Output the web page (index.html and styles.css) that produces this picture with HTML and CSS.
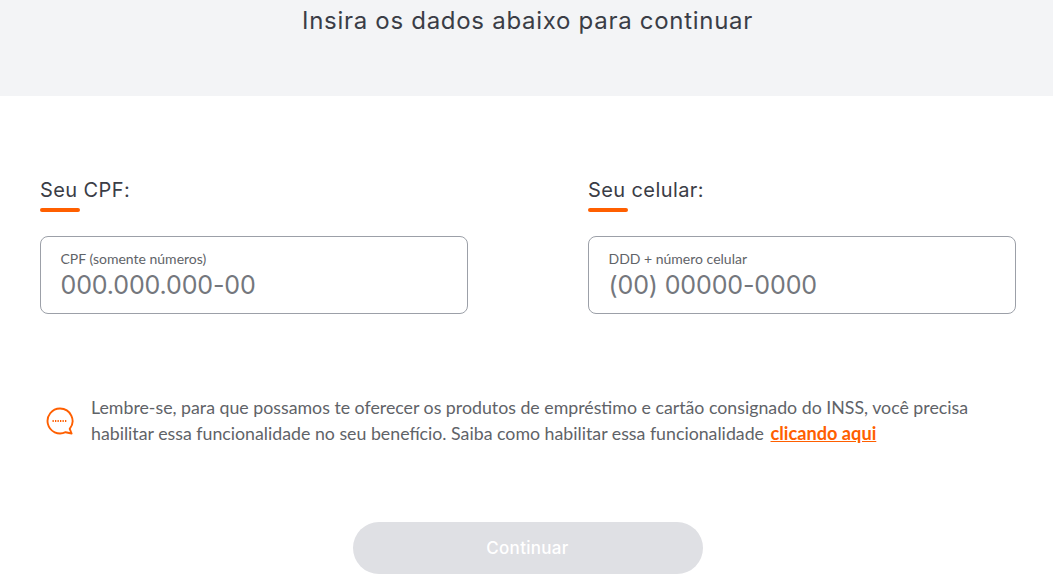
FILE: index.html
```html
<!DOCTYPE html>
<html lang="pt-BR">
<head>
  <meta charset="UTF-8">
  <title>Insira os dados</title>
  <link rel="stylesheet" href="styles.css">
</head>
<body>
  <div class="top-band">
    <h1>Insira os dados abaixo para continuar</h1>
  </div>

  <div class="form-row">
    <div class="field-col">
      <h2>Seu CPF:</h2>
      <div class="dash"></div>
      <label class="field-box">
        <span class="field-label">CPF (somente números)</span>
        <input class="field-input" type="text" placeholder="000.000.000-00">
      </label>
    </div>
    <div class="field-col">
      <h2>Seu celular:</h2>
      <div class="dash"></div>
      <label class="field-box">
        <span class="field-label">DDD + número celular</span>
        <input class="field-input" type="text" placeholder="(00) 00000-0000">
      </label>
    </div>
  </div>

  <div class="notice">
    <svg class="notice-icon" width="30" height="30" viewBox="0 0 30 30" fill="none">
      <path d="M15 2.5a12.5 12.5 0 1 0 5.6 23.7l6 1.3-1.9-4.6A12.5 12.5 0 0 0 15 2.5z" stroke="#ff5f00" stroke-width="1.9" stroke-linejoin="round"/>
      <path d="M7.5 15h15" stroke="#ff5f00" stroke-width="1.8" stroke-dasharray="1.3 1.2"/>
    </svg>
    <p>Lembre-se, para que possamos te oferecer os produtos de empréstimo e cartão consignado do INSS, você precisa habilitar essa funcionalidade no seu benefício. Saiba como habilitar essa funcionalidade <a href="#">clicando aqui</a></p>
  </div>

  <div class="actions">
    <button class="continue-btn" disabled>Continuar</button>
  </div>
</body>
</html>
```

FILE: styles.css
```css
* {
  box-sizing: border-box;
}
html, body {
  height: 584px;
  overflow: hidden;
}
body {
  margin: 0;
  background: white;
  font-family: "Lato", sans-serif;
  color: #5f6368;
}
.top-band {
  height: 96px;
  padding-left: 2px;
  background-color: #f3f4f6;
  text-align: center;
}
h1 {
  margin: 0;
  padding-top: 6px;
  font-family: "Inter", sans-serif;
  font-size: 24px;
  line-height: 30px;
  font-weight: 400;
  letter-spacing: 0.71px;
  color: #3a3d46;
}
.form-row {
  display: flex;
  gap: 120px;
  padding: 82px 37px 0 40px;
}
.field-col {
  width: 428px;
}
h2 {
  margin: 0;
  font-family: "Inter", sans-serif;
  font-size: 20px;
  line-height: 24px;
  font-weight: 400;
  letter-spacing: 0.4px;
  color: #3a3d46;
}
.dash {
  width: 40px;
  height: 4px;
  margin-top: 6px;
  border-radius: 2px;
  background-color: #ff5f00;
}
.field-box {
  display: block;
  height: 78px;
  margin-top: 24px;
  padding: 14px 19.5px 0;
  border: 1px solid #9ca0a8;
  border-radius: 8px;
}
.field-label {
  display: block;
  font-size: 14px;
  line-height: 16px;
  color: #5f6368;
}
.field-input {
  display: block;
  width: 100%;
  padding: 0;
  margin-top: 3px;
  border: none;
  outline: none;
  background: none;
  font-family: "Inter", sans-serif;
  font-size: 25px;
  letter-spacing: -0.12px;
  line-height: 30px;
  height: 30px;
}
.field-input::placeholder {
  color: #74777d;
  opacity: 1;
}
.notice {
  display: flex;
  align-items: center;
  gap: 16px;
  padding: 80px 60px 0 45px;
}
.notice-icon {
  flex-shrink: 0;
  margin-top: 2px;
}
.notice p {
  margin: 0;
  font-size: 17.76px;
  line-height: 26px;
  color: #5f6368;
}
.notice a {
  margin-left: 2px;
  font-size: 18.2px;
  font-weight: 700;
  color: #ff5f00;
}
.actions {
  display: flex;
  justify-content: center;
  padding: 76px 0 0 2px;
}
.continue-btn {
  width: 350px;
  height: 52px;
  padding-bottom: 2px;
  border: none;
  border-radius: 26px;
  background-color: #dfe0e4;
  color: white;
  font-family: "Inter", sans-serif;
  font-size: 17px;
  font-weight: 500;
  letter-spacing: 0.3px;
}
```
